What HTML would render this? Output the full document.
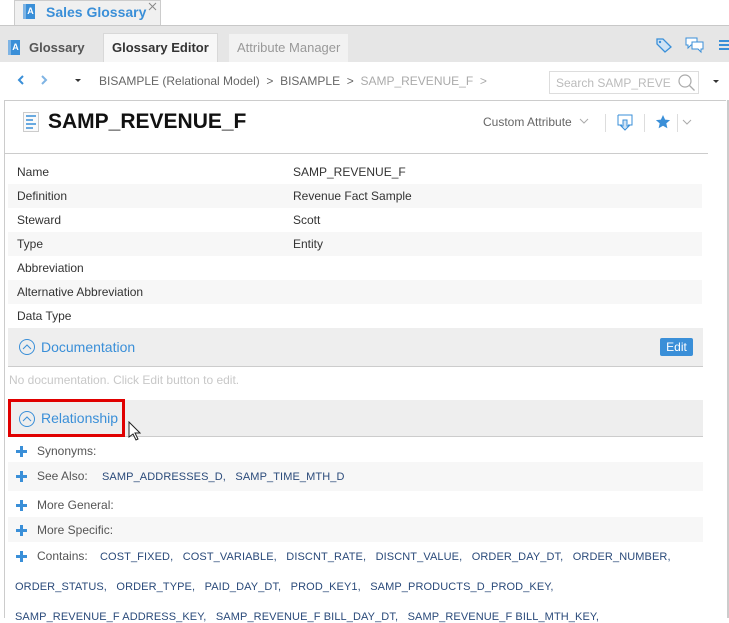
<!DOCTYPE html>
<html><head><meta charset="utf-8"><style>
body{margin:0;width:729px;height:618px;overflow:hidden;background:#fff;font-family:"Liberation Sans",sans-serif;position:relative}
.a{position:absolute}
.t{font-size:12px;color:#333;white-space:nowrap}
.row{position:absolute;left:8px;width:694px;height:24px}
.row.s{background:#f7f7f7}
.row span{position:absolute;top:5px;font-size:12px;color:#333}
.plus{position:absolute;left:16px;width:11px;height:11px}
.plus:before{content:"";position:absolute;left:4px;top:0;width:3px;height:11px;background:#3a8fd8}
.plus:after{content:"";position:absolute;left:0;top:4px;width:11px;height:3px;background:#3a8fd8}
.lnk{font-size:11px;color:#2a4a7a;white-space:nowrap;letter-spacing:.1px}
.ico{position:absolute;width:12px;height:15px;background:#3a8fd8;border-left:3px solid #7fb4e4;box-sizing:border-box;color:#fff;font-size:9px;font-weight:bold;text-align:center;line-height:15px}
.circ{position:absolute;width:14px;height:14px;border:1px solid #3a8fd8;border-radius:50%}
</style></head><body>
<div class="a" style="left:14px;top:0;width:147px;height:25px;background:#f0f0f0;border:1px solid #ccc;border-bottom:none;box-sizing:border-box"></div>
<div class="ico" style="left:23px;top:4px">A</div>
<div class="a" style="left:46px;top:4px;font-size:14px;color:#3a8fd8;font-weight:bold">Sales Glossary</div>
<svg class="a" style="left:148px;top:2px" width="9" height="9"><path d="M1 1l7 7M8 1l-7 7" stroke="#888"/></svg>
<div class="a" style="left:0;top:25px;width:729px;height:1px;background:#c8c8c8"></div>
<div class="a" style="left:0;top:26px;width:729px;height:36px;background:#e6e6e6"></div>
<div class="ico" style="left:8px;top:40px">A</div>
<div class="a" style="left:29px;top:40px;font-size:13px;color:#555;font-weight:bold">Glossary</div>
<div class="a" style="left:103px;top:33px;width:115px;height:29px;background:#f7f7f7;border:1px solid #d8d8d8;border-bottom:none;box-sizing:border-box"></div>
<div class="a" style="left:112px;top:40px;font-size:13px;color:#333;font-weight:bold">Glossary Editor</div>
<div class="a" style="left:229px;top:34px;width:119px;height:28px;background:#f2f2f2"></div>
<div class="a" style="left:237px;top:40px;font-size:13px;color:#999">Attribute Manager</div>
<svg class="a" style="left:655px;top:37px" width="18" height="16"><path d="M2 2h6l8 8-6 5-8-8z" fill="#cfe3f5" stroke="#3a8fd8" stroke-width="1.3"/><circle cx="5" cy="5" r="1.2" fill="#3a8fd8"/></svg>
<svg class="a" style="left:685px;top:36px" width="20" height="18"><path d="M1 2h11v7h-6l-3 3v-3h-2z" fill="#fff" stroke="#3a8fd8"/><path d="M7 6h11v7h-2v3l-3-3h-6z" fill="#fff" stroke="#3a8fd8"/></svg>
<div class="a" style="left:719px;top:40px;width:10px;height:2px;background:#3a8fd8;box-shadow:0 4px #3a8fd8,0 8px #3a8fd8"></div>
<svg class="a" style="left:17px;top:75px" width="8" height="10"><path d="M6 1l-4 4 4 4" fill="none" stroke="#3a8fd8" stroke-width="2"/></svg>
<svg class="a" style="left:40px;top:75px" width="8" height="10"><path d="M2 1l4 4-4 4" fill="none" stroke="#7fb4e4" stroke-width="2"/></svg>
<div class="a" style="left:75px;top:79px;border:3px solid transparent;border-top:3px solid #333"></div>
<div class="a t" style="left:99px;top:74px;color:#666">BISAMPLE (Relational Model) &nbsp;&gt;&nbsp; BISAMPLE &nbsp;&gt;&nbsp; <span style="color:#aaa">SAMP_REVENUE_F &nbsp;&gt;</span></div>
<div class="a" style="left:549px;top:71px;width:150px;height:23px;border:1px solid #ddd;box-sizing:border-box"></div>
<div class="a" style="left:556px;top:76px;font-size:12px;color:#bbb">Search SAMP_REVE</div>
<svg class="a" style="left:677px;top:73px" width="20" height="20"><circle cx="8" cy="8" r="6" fill="none" stroke="#aaa" stroke-width="1.2"/><path d="M12.5 12.5l5 5" stroke="#aaa" stroke-width="1.3"/></svg>
<div class="a" style="left:713px;top:80px;border:3px solid transparent;border-top:3px solid #333"></div>
<div class="a" style="left:4px;top:100px;width:722px;height:1px;background:#ccc"></div>
<div class="a" style="left:4px;top:100px;width:1px;height:518px;background:#ccc"></div>
<div class="a" style="left:727px;top:100px;width:2px;height:518px;background:#ccc"></div>
<svg class="a" style="left:23px;top:112px" width="16" height="20"><rect x=".5" y=".5" width="15" height="19" fill="#fafafa" stroke="#ccc"/><path d="M3 4h10M3 8h7M3 12h10M3 16h7" stroke="#3a8fd8" stroke-width="1.5"/></svg>
<div class="a" style="left:48px;top:110px;font-size:21px;font-weight:bold;color:#111">SAMP_REVENUE_F</div>
<div class="a t" style="left:483px;top:115px;color:#666">Custom Attribute</div>
<svg class="a" style="left:579px;top:117px" width="10" height="8"><path d="M1 2l4 4 4-4" fill="none" stroke="#aaa"/></svg>
<div class="a" style="left:605px;top:114px;width:1px;height:18px;background:#ddd"></div>
<svg class="a" style="left:617px;top:114px" width="16" height="18"><path d="M1 1h14v10h-4M5 11h-4v-10" fill="none" stroke="#3a8fd8"/><path d="M6 6h4v6h2l-4 4-4-4h2z" fill="#cfe3f5" stroke="#3a8fd8"/></svg>
<div class="a" style="left:644px;top:114px;width:1px;height:18px;background:#ddd"></div>
<svg class="a" style="left:655px;top:114px" width="16" height="16"><path d="M8 1l2.1 4.6 5 .5-3.8 3.3 1.1 4.9L8 11.8 3.6 14.3l1.1-4.9L.9 6.1l5-.5z" fill="#3a8fd8"/></svg>
<div class="a" style="left:677px;top:114px;width:1px;height:18px;background:#ddd"></div>
<svg class="a" style="left:682px;top:118px" width="10" height="8"><path d="M1 2l4 4 4-4" fill="none" stroke="#aaa"/></svg>
<div class="a" style="left:4px;top:153px;width:704px;height:1px;background:#ccc"></div>
<div class="row" style="top:160px"><span style="left:9px">Name</span><span style="left:285px">SAMP_REVENUE_F</span></div>
<div class="row s" style="top:184px"><span style="left:9px">Definition</span><span style="left:285px">Revenue Fact Sample</span></div>
<div class="row" style="top:208px"><span style="left:9px">Steward</span><span style="left:285px">Scott</span></div>
<div class="row s" style="top:232px"><span style="left:9px">Type</span><span style="left:285px">Entity</span></div>
<div class="row" style="top:256px"><span style="left:9px">Abbreviation</span></div>
<div class="row s" style="top:280px"><span style="left:9px">Alternative Abbreviation</span></div>
<div class="row" style="top:304px"><span style="left:9px">Data Type</span></div>
<div class="a" style="left:8px;top:328px;width:695px;height:38px;background:#eeeeee;border-bottom:1px solid #ccc"></div>
<div class="circ" style="left:19px;top:339px"></div>
<svg class="a" style="left:22px;top:343px" width="10" height="8"><path d="M1 6l4-4 4 4" fill="none" stroke="#3a8fd8"/></svg>
<div class="a" style="left:41px;top:339px;font-size:14px;color:#3a8fd8">Documentation</div>
<div class="a" style="left:660px;top:338px;width:33px;height:18px;background:#3a8fd8;border-radius:2px;color:#fff;font-size:12px;text-align:center;line-height:18px">Edit</div>
<div class="a t" style="left:9px;top:373px;color:#c8c8c8">No documentation. Click Edit button to edit.</div>
<div class="a" style="left:8px;top:400px;width:695px;height:36px;background:#eeeeee;border-bottom:1px solid #ccc"></div>
<div class="a" style="left:8px;top:399px;width:117px;height:38px;border:3px solid #e00000;box-sizing:border-box"></div>
<div class="circ" style="left:19px;top:411px"></div>
<svg class="a" style="left:22px;top:415px" width="10" height="8"><path d="M1 6l4-4 4 4" fill="none" stroke="#3a8fd8"/></svg>
<div class="a" style="left:41px;top:410px;font-size:14px;color:#3a8fd8">Relationship</div>
<svg class="a" style="left:128px;top:421px" width="13" height="20"><path d="M1 1v15l4-3 3 6 2-1-3-6h5z" fill="#fff" stroke="#222"/></svg>
<div class="plus" style="top:446px"></div><div class="a t" style="left:37px;top:444px;color:#555">Synonyms:</div>
<div class="a" style="left:8px;top:462px;width:695px;height:29px;background:#f7f7f7"></div>
<div class="plus" style="top:471px"></div><div class="a t" style="left:37px;top:469px;color:#555">See Also:</div><div class="a lnk" style="left:102px;top:471px">SAMP_ADDRESSES_D, &nbsp;&nbsp;SAMP_TIME_MTH_D</div>
<div class="plus" style="top:500px"></div><div class="a t" style="left:37px;top:498px;color:#555">More General:</div>
<div class="a" style="left:8px;top:517px;width:695px;height:25px;background:#f7f7f7"></div>
<div class="plus" style="top:525px"></div><div class="a t" style="left:37px;top:523px;color:#555">More Specific:</div>
<div class="plus" style="top:551px"></div><div class="a t" style="left:37px;top:549px;color:#555">Contains:</div><div class="a lnk" style="left:100px;top:551px">COST_FIXED, &nbsp;&nbsp;COST_VARIABLE, &nbsp;&nbsp;DISCNT_RATE, &nbsp;&nbsp;DISCNT_VALUE, &nbsp;&nbsp;ORDER_DAY_DT, &nbsp;&nbsp;ORDER_NUMBER,</div>
<div class="a lnk" style="left:15px;top:581px">ORDER_STATUS, &nbsp;&nbsp;ORDER_TYPE, &nbsp;&nbsp;PAID_DAY_DT, &nbsp;&nbsp;PROD_KEY1, &nbsp;&nbsp;SAMP_PRODUCTS_D_PROD_KEY,</div>
<div class="a lnk" style="left:15px;top:611px">SAMP_REVENUE_F ADDRESS_KEY, &nbsp;&nbsp;SAMP_REVENUE_F BILL_DAY_DT, &nbsp;&nbsp;SAMP_REVENUE_F BILL_MTH_KEY,</div>
</body></html>
